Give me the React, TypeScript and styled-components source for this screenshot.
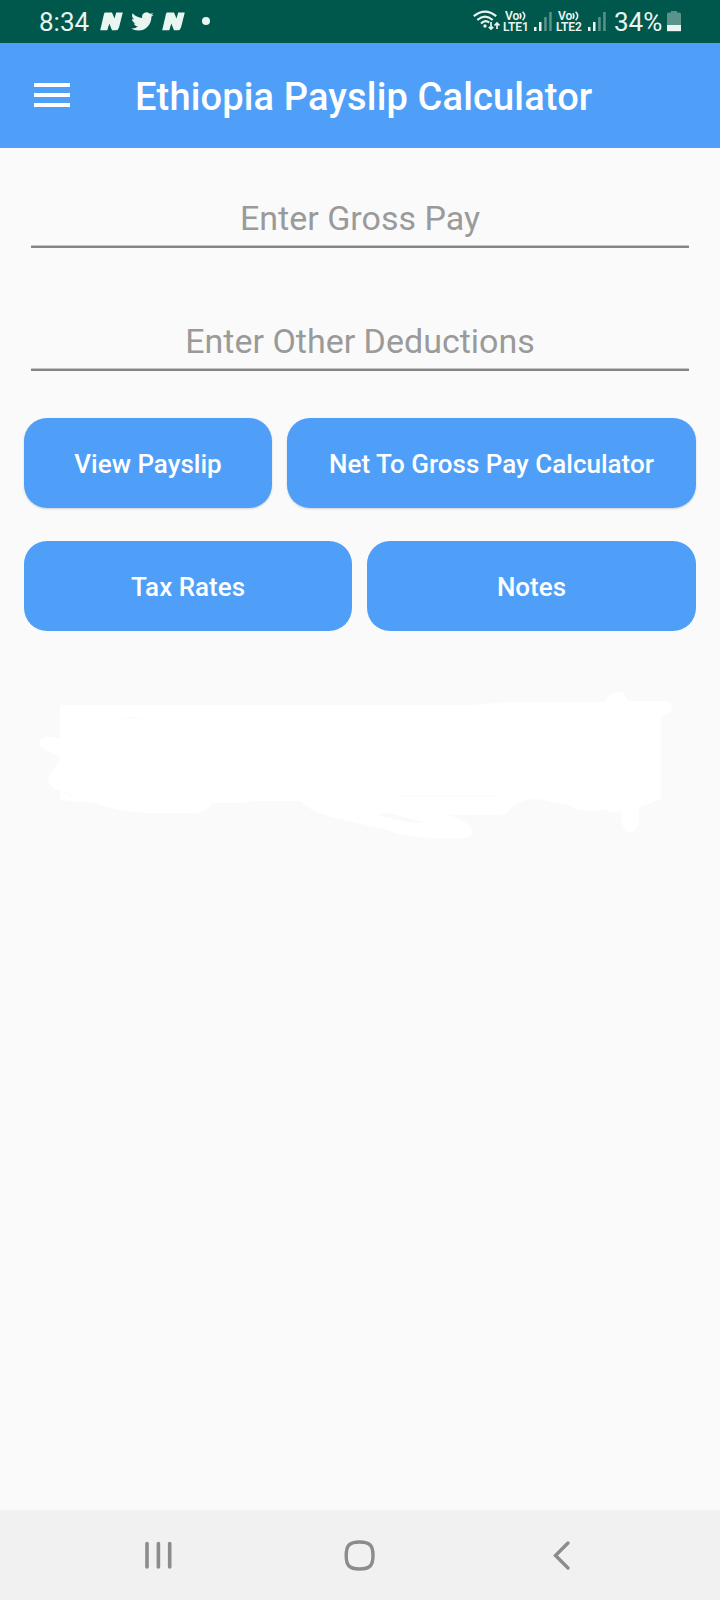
import React from 'react';
import styled, { createGlobalStyle } from 'styled-components';

const GlobalStyle = createGlobalStyle`
  * { box-sizing: border-box; }
  body { margin: 0; background: #fafafa; font-family: Roboto, sans-serif; }
`;

const Screen = styled.div`
  width: 720px;
  height: 1600px;
  display: flex;
  flex-direction: column;
  background: #fafafa;
  overflow: hidden;
`;

const StatusBar = styled.header`
  height: 43px;
  flex: none;
  display: flex;
  justify-content: space-between;
  padding: 0 39px 0 39px;
  background: #00574b;
  color: #e9f5f1;
`;

const StatusGroup = styled.div`
  display: flex;
  align-items: flex-start;
  height: 43px;
`;

const StatusText = styled.span<{ $width: number }>`
  width: ${(p) => p.$width}px;
  font-size: 26px;
  line-height: 44px;
  white-space: nowrap;
`;

const StatusIcon = styled.svg<{ $gap?: number }>`
  display: block;
  flex: none;
  margin-left: ${(p) => p.$gap ?? 0}px;
`;

const CarrierBadge = styled.div<{ $gap: number }>`
  display: flex;
  flex-direction: column;
  width: 28px;
  margin-left: ${(p) => p.$gap}px;
  padding-top: 10px;
  font-size: 12px;
  font-weight: 600;
  line-height: 12px;
  white-space: nowrap;
`;

const CarrierVoice = styled.span`
  display: flex;
  height: 11px;
  padding-left: 2px;
`;

const CarrierNetwork = styled.span`
  letter-spacing: -0.1px;
`;

const AppBar = styled.div`
  height: 105px;
  flex: none;
  display: flex;
  align-items: center;
  padding-left: 34px;
  background: #4f9ff8;
`;

const MenuButton = styled.button`
  display: flex;
  flex-direction: column;
  gap: 5.7px;
  width: 36px;
  padding: 0;
  margin-top: -1px;
  border: 0;
  background: none;
`;

const MenuLine = styled.span`
  height: 4px;
  background: #fff;
`;

const Title = styled.h1`
  margin: 2px 0 0 65px;
  font-size: 38px;
  font-weight: 500;
  line-height: 46px;
  letter-spacing: 0.15px;
  color: #fff;
  white-space: nowrap;
`;

const Content = styled.main`
  flex: 1;
  padding: 38px 24px 0;
`;

const Fields = styled.div`
  display: flex;
  flex-direction: column;
  gap: 61px;
  margin: 0 7px 47px;
`;

const Field = styled.input`
  display: block;
  width: 658px;
  height: 62px;
  padding: 3px 0 0;
  border: 0;
  border-bottom: 2px solid #858585;
  border-radius: 0;
  outline: 0;
  background: none;
  box-shadow: inset 0 -1px #c4c4c4;
  font: 400 34px Roboto, sans-serif;
  text-align: center;
  color: #212121;

  &::placeholder { color: #9a9a9a; opacity: 1; }
`;

const ButtonRow = styled.div<{ $columns: string }>`
  display: grid;
  grid-template-columns: ${(p) => p.$columns};
  gap: 15px;
  margin-bottom: 33px;
`;

const ActionButton = styled.button<{ $raised?: boolean }>`
  height: 90px;
  padding: 2px 0 0;
  border: 0;
  border-radius: 23px;
  background: #4f9ff8;
  box-shadow: ${(p) => (p.$raised ? '0 1px 2px rgba(60, 70, 110, 0.22)' : 'none')};
  font: 500 26px Roboto, sans-serif;
  color: #fff;
  white-space: nowrap;
`;

const Scribble = styled.svg`
  display: block;
  margin: 49px -24px 0;
`;

const NavBar = styled.nav`
  height: 90px;
  flex: none;
  display: grid;
  grid-template-columns: 198px 210px 24px;
  align-items: center;
  padding-left: 143px;
  background: #f1f1f1;
`;

const NewsIcon = ({ gap }: { gap: number }) => (
  <StatusIcon $gap={gap} width="23" height="43" viewBox="0 0 23 43" fill="#e9f5f1">
    <path d="M5 12.500H12L14.500 18.500L16.200 12.500H22.800L19 27.500Q18.200 30.200 15.800 30.200H12L9.300 23.500L7.300 30.200H.2L4 14Q4.300 12.500 5 12.500Z" />
  </StatusIcon>
);

const Carrier = ({ gap, network }: { gap: number; network: string }) => (
  <CarrierBadge $gap={gap}>
    <CarrierVoice>
      Vo
      <svg width="8" height="11" viewBox="0 0 8 11" fill="none" stroke="#e9f5f1" strokeWidth="1.600">
        <path d="M.8 3.200Q3 6 .8 8.800M3.600 1.800Q7.800 6 3.600 10.200" />
      </svg>
    </CarrierVoice>
    <CarrierNetwork>{network}</CarrierNetwork>
  </CarrierBadge>
);

const Signal = ({ gap }: { gap: number }) => (
  <StatusIcon $gap={gap} width="18" height="43" viewBox="0 0 18 43" fill="#e9f5f1">
    <rect x="0" y="27" width="2.500" height="4" />
    <rect x="5" y="22" width="2.500" height="9" />
    <rect x="10.200" y="17" width="2.500" height="14" opacity=".38" />
    <rect x="15.200" y="12" width="2.500" height="19" opacity=".38" />
  </StatusIcon>
);

export default function App() {
  return (
    <>
      <GlobalStyle />
      <Screen>
        <StatusBar>
          <StatusGroup>
            <StatusText $width={51}>8:34</StatusText>
            <NewsIcon gap={10} />
            <StatusIcon $gap={8} width="23" height="43" viewBox="0 0 23 43" fill="#e9f5f1">
              <path
                transform="translate(0.200 10.200) scale(.935)"
                d="M23.953 4.570a10 10 0 01-2.825.775 4.958 4.958 0 002.163-2.723c-.951.555-2.005.959-3.127 1.184a4.920 4.920 0 00-8.384 4.482C7.690 8.095 4.067 6.130 1.640 3.162a4.822 4.822 0 00-.666 2.475c0 1.710.870 3.213 2.188 4.096a4.904 4.904 0 01-2.228-.616v.060a4.923 4.923 0 003.946 4.827 4.996 4.996 0 01-2.212.085 4.936 4.936 0 004.604 3.417 9.867 9.867 0 01-6.102 2.105c-.390 0-.779-.023-1.170-.067a13.995 13.995 0 007.557 2.209c9.053 0 13.998-7.496 13.998-13.985 0-.210 0-.420-.015-.630A9.935 9.935 0 0024 4.590z"
              />
            </StatusIcon>
            <NewsIcon gap={8} />
            <StatusIcon $gap={17} width="8" height="43" viewBox="0 0 8 43" fill="#e9f5f1">
              <circle cx="4" cy="21" r="4" />
            </StatusIcon>
          </StatusGroup>
          <StatusGroup>
            <StatusIcon width="28" height="43" viewBox="0 0 28 43" fill="none" stroke="#e9f5f1" strokeWidth="2.200">
              <path d="M.8 16.200Q12 7.200 23.200 16.200M4.300 20Q12 13.200 19.700 20M8 23.500Q12 19.500 16.200 22.500" />
              <circle cx="12" cy="26" r="1.700" fill="#e9f5f1" stroke="none" />
              <path strokeWidth="1.700" d="M18 22V29M15.800 26.800L18 29L20.200 26.800M24 29V23M21.500 25.500L24 23L26.500 25.500" />
            </StatusIcon>
            <Carrier gap={2} network="LTE1" />
            <Signal gap={3} />
            <Carrier gap={4} network="LTE2" />
            <Signal gap={4} />
            <StatusIcon width="8" height="43" />
            <StatusText $width={52}>34%</StatusText>
            <StatusIcon $gap={1} width="14" height="43" viewBox="0 0 14 43" fill="#e9f5f1">
              <path d="M4 11H10V12.500H12.500Q14 12.500 14 14V25H0V14Q0 12.500 1.500 12.500H4Z" opacity=".38" />
              <path d="M0 25H14V31.200H0Z" />
            </StatusIcon>
          </StatusGroup>
        </StatusBar>

        <AppBar>
          <MenuButton aria-label="Menu">
            <MenuLine />
            <MenuLine />
            <MenuLine />
          </MenuButton>
          <Title>Ethiopia Payslip Calculator</Title>
        </AppBar>

        <Content>
          <Fields>
            <Field placeholder="Enter Gross Pay" />
            <Field placeholder="Enter Other Deductions" />
          </Fields>
          <ButtonRow $columns="248px 409px">
            <ActionButton $raised>View Payslip</ActionButton>
            <ActionButton $raised>Net To Gross Pay Calculator</ActionButton>
          </ButtonRow>
          <ButtonRow $columns="328px 329px">
            <ActionButton>Tax Rates</ActionButton>
            <ActionButton>Notes</ActionButton>
          </ButtonRow>
          <Scribble width="720" height="180" viewBox="0 0 720 180" fill="#fff">
            <path d="M60 25H472L510 22H604Q614 8 624 13L627 21H668Q675 28 669 33L661 37V119L649 124L639 127V143Q636 152 629 153Q621 150 621 131L612 133L604 129Q586 135 567 125L538 119Q517 118 507 133L500 135H448Q470 142 472 150Q474 160 458 158Q414 160 386 150L337 138Q309 132 301 121L251 121L245 123H212Q207 133 194 133H149Q119 132 94 123L60 120V111Q45 106 49 96L60 79V76L47 71Q34 64 43 58Q50 56 60 58Z" />
            <path d="M376 135L412 143H425L389 133Z" fill="#fafafa" />
            <path d="M397 116H500M62 116L68 111L71 118M77 92V96M102 91V95M585 88L588 92M122 38H141" fill="none" stroke="#fafafa" strokeWidth="1" />
          </Scribble>
        </Content>

        <NavBar>
          <svg width="32" height="34" viewBox="0 0 32 34" stroke="#8c8c8c" strokeWidth="3.600" strokeLinecap="round">
            <path d="M4 5.500V29M15.400 5.500V29M26.700 5.500V29" />
          </svg>
          <svg width="36" height="34" viewBox="0 0 36 34" fill="none" stroke="#8c8c8c" strokeWidth="3.400">
            <path d="M18.600 4C29 4 32 7.500 32 17.500C32 27.500 29 31 18.600 31C8.200 31 5.200 27.500 5.200 17.500C5.200 7.500 8.200 4 18.600 4Z" />
          </svg>
          <svg width="24" height="34" viewBox="0 0 24 34" fill="none" stroke="#8c8c8c" strokeWidth="3.400" strokeLinecap="round">
            <path d="M17 5L4.500 17.500L17 30" />
          </svg>
        </NavBar>
      </Screen>
    </>
  );
}
